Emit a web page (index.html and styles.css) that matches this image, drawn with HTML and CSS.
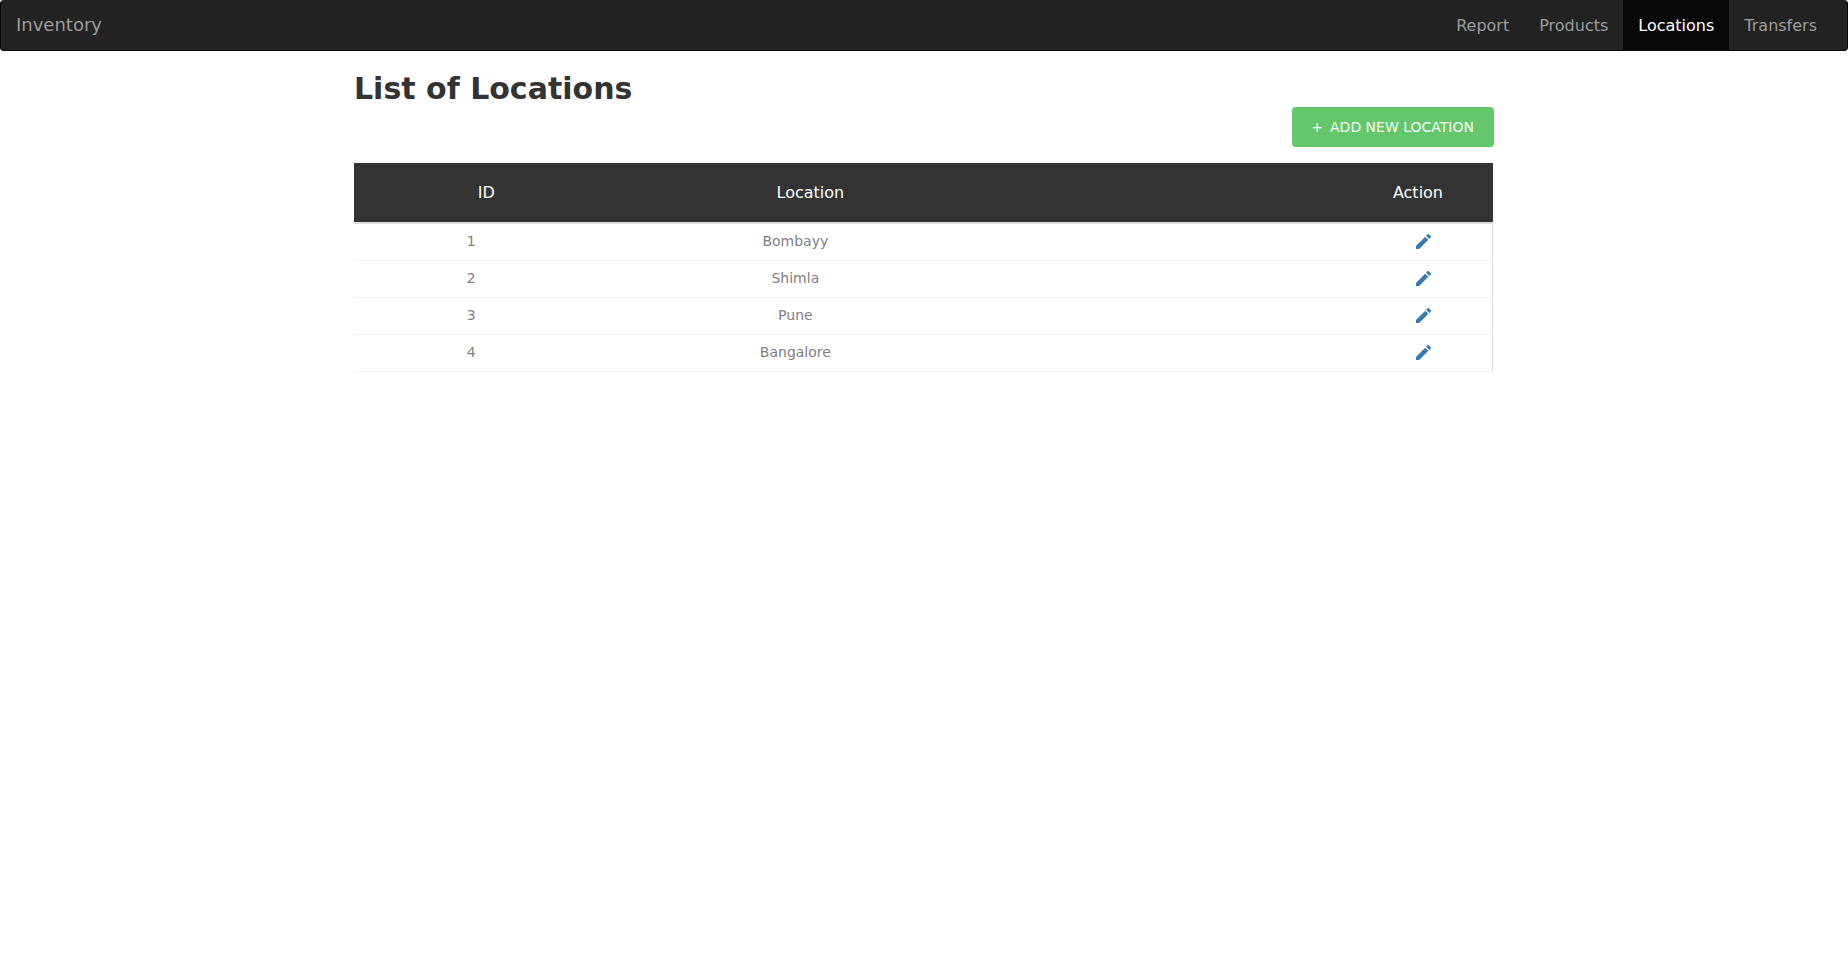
FILE: index.html
```html
<!DOCTYPE html>
<html lang="en">
<head>
<meta charset="utf-8">
<title>Inventory - Locations</title>
<link rel="stylesheet" href="styles.css">
</head>
<body>
<svg class="sprite" aria-hidden="true">
  <symbol id="pencil" viewBox="3 3 18 18"><path d="M3 17.25V21h3.75L17.81 9.94l-3.75-3.75L3 17.25zM20.71 7.04a1 1 0 0 0 0-1.41l-2.34-2.34a1 1 0 0 0-1.41 0l-1.83 1.83 3.75 3.75 1.83-1.83z"/></symbol>
</svg>
<nav class="navbar">
  <a class="brand" href="#">Inventory</a>
  <ul class="nav-links">
    <li><a href="#">Report</a></li>
    <li><a href="#">Products</a></li>
    <li><a class="active" href="#">Locations</a></li>
    <li><a href="#">Transfers</a></li>
  </ul>
</nav>
<main class="container">
  <h1 class="title">List of Locations</h1>
  <div class="toolbar">
    <button class="add-button" type="button"><span class="plus">+</span>ADD NEW LOCATION</button>
  </div>
  <table class="locations">
    <colgroup><col class="col-id"><col class="col-location"><col></colgroup>
    <thead>
      <tr><th>ID</th><th>Location</th><th class="action">Action</th></tr>
    </thead>
    <tbody>
      <tr><td>1</td><td>Bombayy</td><td class="action"><a href="#" aria-label="Edit Bombayy"><svg class="icon"><use href="#pencil"/></svg></a></td></tr>
      <tr><td>2</td><td>Shimla</td><td class="action"><a href="#" aria-label="Edit Shimla"><svg class="icon"><use href="#pencil"/></svg></a></td></tr>
      <tr><td>3</td><td>Pune</td><td class="action"><a href="#" aria-label="Edit Pune"><svg class="icon"><use href="#pencil"/></svg></a></td></tr>
      <tr><td>4</td><td>Bangalore</td><td class="action"><a href="#" aria-label="Edit Bangalore"><svg class="icon"><use href="#pencil"/></svg></a></td></tr>
    </tbody>
  </table>
</main>
</body>
</html>
```
FILE: styles.css
```css
* { box-sizing: border-box; }

body {
  margin: 0;
  background: #fff;
  color: #333;
  font: 14px/20px "DejaVu Sans", sans-serif;
}

a { color: #337ab7; text-decoration: none; }

.sprite { display: none; }

.navbar {
  display: flex;
  justify-content: space-between;
  padding: 0 15px;
  background: #222;
  border: 1px solid #080808;
  border-top: 0;
  border-radius: 4px;
}

.brand {
  padding: 15px 0;
  color: #9d9d9d;
  font-size: 18px;
}

.nav-links {
  display: flex;
  margin: 0;
  padding: 0;
  list-style: none;
}

.nav-links a {
  display: block;
  padding: 16px 15px 14px;
  color: #9d9d9d;
  font-size: 16px;
}

.nav-links .active { background: #080808; color: #fff; }

.container {
  max-width: 1170px;
  margin: 0 auto;
  padding: 20px 15px;
}

.title {
  margin: 0;
  font-size: 30px;
  line-height: 36px;
}

.toolbar { display: flex; justify-content: flex-end; }

.add-button {
  display: flex;
  gap: 7px;
  padding: 10px 20px 10px 19px;
  border: 0;
  border-radius: 4px;
  background: #64c76c;
  color: #f7fcf8;
  font: inherit;
}

.locations {
  width: 100%;
  margin-top: 16px;
  padding-right: 1px;
  table-layout: fixed;
  border-spacing: 0;
  text-align: center;
}

.col-id { width: 20.6%; }
.col-location { width: 36.3%; }

.locations th {
  padding: 20px 8px 19px 38px;
  border-bottom: 2px solid #ddd;
  background: #333;
  color: #fff;
  font-size: 16px;
  font-weight: 400;
}

.locations td {
  padding: 7px 8px 9px;
  border-bottom: 1px solid #f2f2f2;
  color: #808080;
}

.locations td:last-child { border-right: 1px solid #ddd; }

.locations .action { text-align: right; }
.locations th.action { padding-right: 50px; }
.locations td.action { padding-right: 61px; }

.action a { display: flex; justify-content: flex-end; }

.icon { width: 15px; height: 15px; fill: currentColor; }
```
